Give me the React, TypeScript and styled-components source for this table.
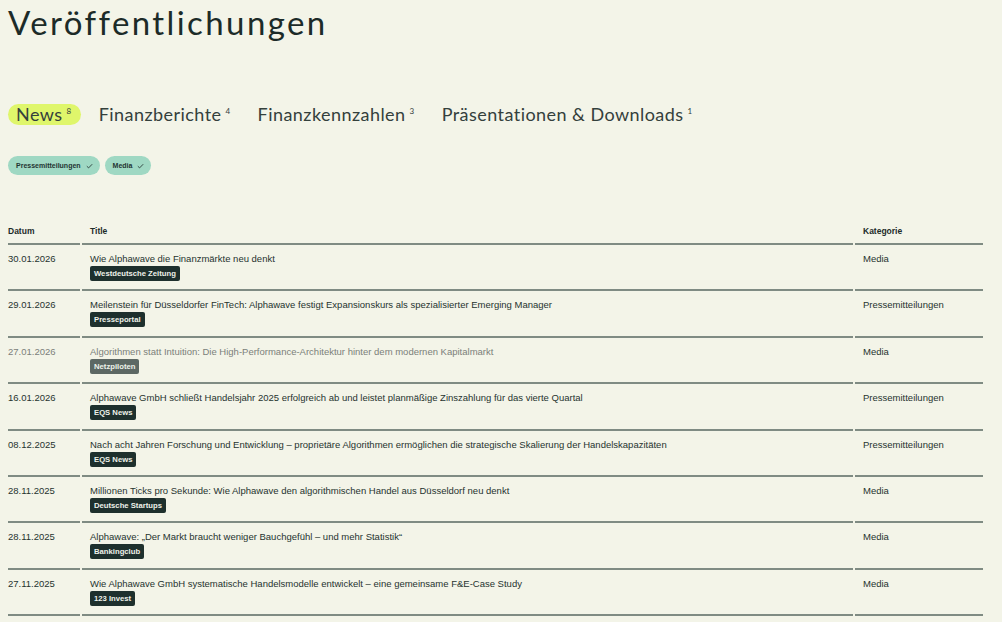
import React from "react";
import styled, { createGlobalStyle } from "styled-components";

const Global = createGlobalStyle`
  html, body { margin: 0; padding: 0; background: #f3f4e8; }
  body { font-family: "Liberation Sans", Arial, sans-serif; color: #1f2d2a; }
`;

const Page = styled.div`
  padding: 0 8px;
  display: flex;
  flex-direction: column;
`;

const Heading = styled.h1`
  margin: 0;
  padding-top: 2px;
  font-family: "Lato", sans-serif;
  font-weight: 400;
  font-size: 33px;
  line-height: 40px;
  letter-spacing: 2.4px;
  color: #1c2b28;
`;

const Tabs = styled.nav`
  display: flex;
  align-items: center;
  gap: 10px;
  margin-top: 62px;
`;

const Tab = styled.div<{ $active?: boolean }>`
  display: flex;
  align-items: flex-start;
  height: 21px;
  padding: 0 9px 0 8px;
  border-radius: 11px;
  background: ${(p) => (p.$active ? "#dff66b" : "transparent")};
  font-family: "Lato", sans-serif;
  font-weight: 400;
  font-size: 18px;
  line-height: 21px;
  letter-spacing: 0.45px;
  color: #34403c;
`;

const Sup = styled.sup`
  font-size: 8px;
  line-height: 8px;
  margin-left: 4px;
  margin-top: 3px;
  vertical-align: top;
`;

const Chips = styled.div`
  display: flex;
  gap: 5px;
  margin-top: 31px;
`;

const Chip = styled.div`
  display: flex;
  align-items: center;
  gap: 5px;
  height: 19px;
  padding: 0 7px 0 8px;
  border-radius: 10px;
  background: #9fd8c3;
  font-size: 7px;
  font-weight: 700;
  color: #1f3532;
`;

const Check = () => (
  <svg width="7" height="6" viewBox="0 0 7 6" fill="none">
    <path d="M0.8 3.2 L2.6 4.9 L6.2 1.2" stroke="#2a3d3a" strokeWidth="0.9" />
  </svg>
);

const Table = styled.table`
  width: 979px;
  margin-top: 51px;
  margin-left: -2px;
  border-collapse: separate;
  border-spacing: 2px 0;
  font-size: 9.5px;
`;

const Th = styled.th<{ $first?: boolean; $w?: number }>`
  text-align: left;
  font-weight: 700;
  font-size: 8.5px;
  padding: 0 0 7px ${(p) => (p.$first ? "0" : "8px")};
  border-bottom: 2px solid #7f8b83;
  width: ${(p) => (p.$w ? `${p.$w}px` : "auto")};
  color: #1c2b28;
`;

const Td = styled.td<{ $first?: boolean; $muted?: boolean }>`
  vertical-align: top;
  height: 46.4px;
  box-sizing: border-box;
  padding: 8px 0 0 ${(p) => (p.$first ? "0" : "8px")};
  border-bottom: 2px solid #7f8b83;
  line-height: 11px;
  color: ${(p) => (p.$muted ? "#7b807a" : "#26332f")};
`;

const TitleText = styled.div``;

const Badge = styled.span<{ $muted?: boolean }>`
  display: inline-block;
  margin-top: 2px;
  height: 15px;
  line-height: 15px;
  padding: 0 4px;
  border-radius: 2px;
  background: ${(p) => (p.$muted ? "#5d6864" : "#1e302d")};
  color: #eef2ea;
  font-size: 7.7px;
  font-weight: 700;
`;

type Row = { date: string; title: string; source: string; cat: string; muted?: boolean };

const rows: Row[] = [
  { date: "30.01.2026", title: "Wie Alphawave die Finanzmärkte neu denkt", source: "Westdeutsche Zeitung", cat: "Media" },
  { date: "29.01.2026", title: "Meilenstein für Düsseldorfer FinTech: Alphawave festigt Expansionskurs als spezialisierter Emerging Manager", source: "Presseportal", cat: "Pressemitteilungen" },
  { date: "27.01.2026", title: "Algorithmen statt Intuition: Die High-Performance-Architektur hinter dem modernen Kapitalmarkt", source: "Netzpiloten", cat: "Media", muted: true },
  { date: "16.01.2026", title: "Alphawave GmbH schließt Handelsjahr 2025 erfolgreich ab und leistet planmäßige Zinszahlung für das vierte Quartal", source: "EQS News", cat: "Pressemitteilungen" },
  { date: "08.12.2025", title: "Nach acht Jahren Forschung und Entwicklung – proprietäre Algorithmen ermöglichen die strategische Skalierung der Handelskapazitäten", source: "EQS News", cat: "Pressemitteilungen" },
  { date: "28.11.2025", title: "Millionen Ticks pro Sekunde: Wie Alphawave den algorithmischen Handel aus Düsseldorf neu denkt", source: "Deutsche Startups", cat: "Media" },
  { date: "28.11.2025", title: "Alphawave: „Der Markt braucht weniger Bauchgefühl – und mehr Statistik“", source: "Bankingclub", cat: "Media" },
  { date: "27.11.2025", title: "Wie Alphawave GmbH systematische Handelsmodelle entwickelt – eine gemeinsame F&E-Case Study", source: "123 Invest", cat: "Media" },
];

const tabs = [
  { label: "News", n: 8, active: true },
  { label: "Finanzberichte", n: 4 },
  { label: "Finanzkennzahlen", n: 3 },
  { label: "Präsentationen & Downloads", n: 1 },
];

export default function App() {
  return (
    <>
      <Global />
      <Page>
        <Heading>Veröffentlichungen</Heading>
        <Tabs>
          {tabs.map((t) => (
            <Tab key={t.label} $active={t.active}>
              {t.label}
              <Sup>{t.n}</Sup>
            </Tab>
          ))}
        </Tabs>
        <Chips>
          <Chip>Pressemitteilungen <Check /></Chip>
          <Chip>Media <Check /></Chip>
        </Chips>
        <Table>
          <thead>
            <tr>
              <Th $first $w={72}>Datum</Th>
              <Th>Title</Th>
              <Th $w={120}>Kategorie</Th>
            </tr>
          </thead>
          <tbody>
            {rows.map((r, i) => (
              <tr key={i}>
                <Td $first $muted={r.muted}>{r.date}</Td>
                <Td $muted={r.muted}>
                  <TitleText>{r.title}</TitleText>
                  <Badge $muted={r.muted}>{r.source}</Badge>
                </Td>
                <Td>{r.cat}</Td>
              </tr>
            ))}
          </tbody>
        </Table>
      </Page>
    </>
  );
}
